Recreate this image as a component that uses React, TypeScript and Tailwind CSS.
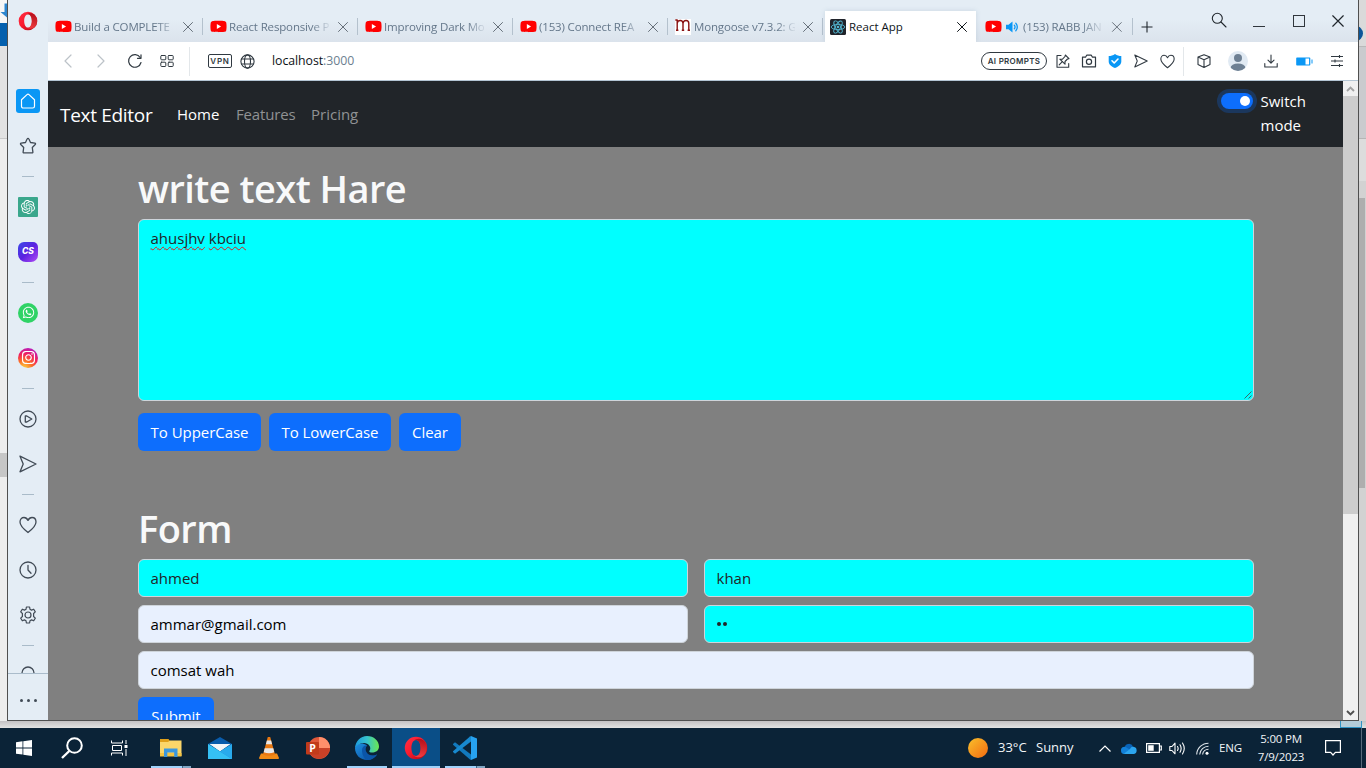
import type { ReactNode } from "react";
import { FaInstagram, FaWhatsapp, FaYoutube } from "react-icons/fa";
import { SiOpenai } from "react-icons/si";

const line = { fill: "none", stroke: "currentColor", strokeLinecap: "round", strokeLinejoin: "round" } as const;

/* ---------- shared glyphs ---------- */

function Opera({ className }: { className: string }) {
  return (
    <svg viewBox="0 0 24 24" className={className}>
      <defs>
        <linearGradient id="opera-a" x1="0" y1="0" x2="1" y2="1">
          <stop offset="0" stopColor="#ff3044" />
          <stop offset=".45" stopColor="#fa1b2f" />
          <stop offset="1" stopColor="#a8060f" />
        </linearGradient>
        <linearGradient id="opera-b" x1="0" y1="0" x2="0" y2="1">
          <stop offset="0" stopColor="#9c0a12" />
          <stop offset="1" stopColor="#ff4b4b" />
        </linearGradient>
      </defs>
      <path fillRule="evenodd" fill="url(#opera-a)" d="M12 .8a11.200 11.200 0 1 0 0 22.400A11.200 11.200 0 0 0 12 .8Zm0 3.200c2.700 0 4.600 3.600 4.600 8s-1.900 8-4.600 8-4.600-3.600-4.600-8 1.900-8 4.600-8Z" />
      <path fill="url(#opera-b)" d="M9.800 4.800C10.500 4.300 11.200 4 12 4c2.700 0 4.600 3.600 4.600 8s-1.900 8-4.600 8c-.8 0-1.500-.3-2.200-.8 3.500 4 13 2.500 13-7.200s-9.500-11.200-13-7.200Z" opacity=".75" />
    </svg>
  );
}

function Cross({ className }: { className: string }) {
  return (
    <svg viewBox="0 0 12 12" className={className}>
      <path {...line} d="M1.500 1.500l9 9M10.500 1.500l-9 9" strokeWidth="1" />
    </svg>
  );
}

function Heart({ className }: { className: string }) {
  return (
    <svg viewBox="0 0 18 18" className={className}>
      <path {...line} strokeWidth="1.300" d="M9 16.500C5 13.500 1 10 1 6.100 1 3.300 2.800 1.500 5 1.500c1.800 0 3.200 1.200 4 2.900.8-1.700 2.200-2.900 4-2.900 2.200 0 4 1.800 4 4.600 0 3.900-4 7.400-8 10.400Z" />
    </svg>
  );
}

function Plane({ className }: { className: string }) {
  return (
    <svg viewBox="0 0 18 18" className={className}>
      <path {...line} strokeWidth="1.300" d="M1 1.200 17 9 1 16.800 4.200 9Z" />
    </svg>
  );
}

function Chevron({ className, d }: { className: string; d: string }) {
  return (
    <svg viewBox="0 0 12 16" className={className}>
      <path {...line} d={d} strokeWidth="1.200" />
    </svg>
  );
}

/* ---------- tabs ---------- */

function YouTubeMark() {
  return (
    <span className="relative flex h-4 w-4 shrink-0 items-center justify-center">
      <span className="h-[7px] w-[7px] bg-white" />
      <FaYoutube className="absolute -left-[0.5px] -top-[0.5px] size-[17px] text-[#f00]" />
    </span>
  );
}

function MongooseMark() {
  return (
    <span className="flex size-4 shrink-0 bg-white">
      <svg viewBox="0 0 16 16" className="size-4">
        <path fill="none" stroke="#8a1212" strokeWidth="1.400" d="M2.200 11.500V.500M2.200 4.500c.3-4 5.800-4 5.800 0v7M8 4.500c.3-4 5.800-4 5.800 0v7M.300 1h2M1 11.200h2.400M6.800 11.200h2.400M12.600 11.200H15" />
      </svg>
    </span>
  );
}

function ReactMark() {
  return (
    <svg viewBox="0 0 16 16" className="size-4 shrink-0">
      <rect width="16" height="16" rx="1.500" fill="#20232a" />
      <g fill="none" stroke="#52b6d0" strokeWidth=".9">
        <ellipse cx="8" cy="8" rx="6.800" ry="2.600" />
        <ellipse cx="8" cy="8" rx="6.800" ry="2.600" transform="rotate(60 8 8)" />
        <ellipse cx="8" cy="8" rx="6.800" ry="2.600" transform="rotate(120 8 8)" />
      </g>
      <circle cx="8" cy="8" r="1.300" fill="#52b6d0" />
    </svg>
  );
}

function Speaker() {
  return (
    <svg viewBox="0 0 12 12" className="ml-[5px] size-3 shrink-0">
      <path fill="#0a97f5" d="M0 3.800h2.500L6.500.5v11L2.500 8.200H0z" />
      <path {...line} stroke="#0a97f5" strokeWidth="1.300" d="M8.300 4.200c1 1 1 2.600 0 3.600M9.800 2.200c2 2 2 5.600 0 7.600" />
    </svg>
  );
}

function Tab({ icon, title, active, muted, last }: { icon: ReactNode; title: string; active?: boolean; muted?: boolean; last?: boolean }) {
  if (active) {
    return (
      <div className="mx-[2px] mt-[11px] flex h-[31px] w-[151px] shrink-0 items-center bg-white pl-[5px] pr-[8px] text-[#10151a] shadow-[0_0_5px_rgba(80,110,140,.18)]">
        {icon}
        <span className="ml-[3px] w-[107px] whitespace-nowrap text-[11.5px]">{title}</span>
        <Cross className="size-3" />
      </div>
    );
  }
  return (
    <div className="flex h-[53px] w-[155px] shrink-0 items-center pl-[7px] text-[#64778a]">
      {icon}
      {muted && <Speaker />}
      <span
        className={
          muted
            ? "ml-[5px] w-[84px] whitespace-nowrap text-[11.5px] tracking-[-0.15px] [mask-image:linear-gradient(to_right,#000_70%,transparent_100%)]"
            : "ml-[3px] w-[101px] whitespace-nowrap text-[11.5px] tracking-[-0.15px] [mask-image:linear-gradient(to_right,#000_82%,transparent_102%)]"
        }
      >
        {title}
      </span>
      <Cross className={last ? "ml-[6px] size-3 text-[#66707a]" : "ml-[7px] size-3 text-[#66707a]"} />
      <span className={last ? "ml-[9px] h-[17px] w-px bg-[#b4c1cd]" : "ml-[8px] h-[17px] w-px bg-[#b4c1cd]"} />
    </div>
  );
}

function TabStrip() {
  return (
    <div className="flex h-[42px] shrink-0 overflow-hidden bg-[linear-gradient(#e4edf5_45%,#dbe3ec)]">
      <Tab icon={<YouTubeMark />} title="Build a COMPLETE" />
      <Tab icon={<YouTubeMark />} title="React Responsive P" />
      <Tab icon={<YouTubeMark />} title="Improving Dark Mo" />
      <Tab icon={<YouTubeMark />} title="(153) Connect REA" />
      <Tab icon={<MongooseMark />} title="Mongoose v7.3.2: G" />
      <Tab icon={<ReactMark />} title="React App" active />
      <Tab icon={<YouTubeMark />} title="(153) RABB JAN" muted last />
      <div className="flex h-[53px] flex-1 items-center text-[#20262c]">
        <svg viewBox="0 0 12 12" className="ml-[8px] size-3"><path d="M6 .5v11M.5 6h11" stroke="currentColor" strokeWidth="1.100" /></svg>
      </div>
      <div className="flex h-10 items-center pr-[13px] text-[#20262c]">
        <svg viewBox="0 0 16 16" className="mr-[26px] size-4"><g {...line} strokeWidth="1.100"><circle cx="6.300" cy="6.300" r="5" /><path d="m10 10 5 5" /></g></svg>
        <span className="mr-[28px] mt-[13px] h-px w-3 bg-[#30363c]" />
        <span className="mr-[26px] mt-[2px] size-3 border border-[#30363c]" />
        <Cross className="mt-[2px] size-[14px]" />
      </div>
    </div>
  );
}

/* ---------- address bar ---------- */

function Slot({ className, children }: { className: string; children: ReactNode }) {
  return <span className={`flex shrink-0 items-center justify-center ${className}`}>{children}</span>;
}

function AddressBar() {
  return (
    <div className="flex h-[39px] shrink-0 items-center border-b border-[#b4c5d3] bg-white text-[#303941]">
      <Slot className="ml-[4px] w-8 text-[#bcc2c8]"><Chevron className="h-4 w-3" d="M9 2 3 8l6 6" /></Slot>
      <Slot className="w-[34px] text-[#bcc2c8]"><Chevron className="h-4 w-3" d="m3 2 6 6-6 6" /></Slot>
      <Slot className="w-[33px]">
        <svg viewBox="0 0 16 16" className="size-4"><g {...line} strokeWidth="1.200"><path d="M14 9.500A6.300 6.300 0 1 1 13.200 4.500" /><path d="M14 1.800v3.500h-3.500" /></g></svg>
      </Slot>
      <Slot className="w-[32px]">
        <svg viewBox="0 0 14 14" className="size-[14px]"><g {...line} strokeWidth="1"><rect x=".8" y="1.500" width="5" height="4.300" rx=".8" /><rect x="8.200" y="1.500" width="5" height="4.300" rx=".8" /><rect x=".8" y="8.200" width="5" height="4.300" rx=".8" /><rect x="8.200" y="8.200" width="5" height="4.300" rx=".8" /></g></svg>
      </Slot>
      <span className="ml-[6px] h-[29px] w-px bg-[#e3e7ea]" />
      <span className="ml-[18px] flex h-[14px] w-6 items-center justify-center rounded-[2px] border border-[#303941] font-[Inter] text-[8px] font-semibold tracking-[0.800px]">VPN</span>
      <svg viewBox="0 0 15 15" className="ml-[8px] size-[15px]"><g {...line} strokeWidth="1.100"><circle cx="7.500" cy="7.500" r="6.600" /><ellipse cx="7.500" cy="7.500" rx="3" ry="6.600" /><path d="M1.500 5h12M1.500 10h12" /></g></svg>
      <span className="ml-[17px] text-[12.3px] tracking-[-0.05px] text-[#0c1116]">localhost<span className="text-[#6c7f90]">:3000</span></span>
      <div className="ml-auto flex items-center pr-[4px]">
        <span className="mr-[3px] flex h-[18px] w-[66px] items-center justify-center rounded-full border border-[#303941] font-[Inter] text-[8px] font-semibold tracking-[0.300px]">AI PROMPTS</span>
        <Slot className="w-[26px]">
          <svg viewBox="0 0 14 14" className="size-[14px]"><g {...line} strokeWidth="1.100"><path d="M5 1.500H1v11.700h11.700V9.500" /><path d="M9.300 1 13 4.700 11.500 5 9 7.500v2.700L3.800 5.200h2.700L9 2.500Z" /><path d="M6.300 7.700 3.200 10.800" /></g></svg>
        </Slot>
        <Slot className="w-[26px]">
          <svg viewBox="0 0 16 14" className="h-[14px] w-4"><g {...line} strokeWidth="1.200"><path d="M1.500 3.200h3l1.200-2h4.600l1.200 2h3v9.600h-13Z" /><circle cx="8" cy="7.700" r="2.600" /></g></svg>
        </Slot>
        <Slot className="w-[26px]">
          <svg viewBox="0 0 14 14" className="size-[14px]"><path fill="#0a97f5" d="M7 0c2 1.500 4 2 6.300 2v5.500c0 3-2.500 5-6.300 6.500C3.200 12.500.7 10.500.7 7.500V2C3 2 5 1.500 7 0Z" /><path {...line} stroke="#fff" strokeWidth="1.600" d="m4 6.800 2.200 2.200L10 5" /></svg>
        </Slot>
        <Slot className="w-[26px]"><Plane className="size-[14px]" /></Slot>
        <Slot className="w-[26px]"><Heart className="size-[15px]" /></Slot>
        <span className="mx-[3px] h-[29px] w-px bg-[#e3e7ea]" />
        <Slot className="w-[34px]">
          <svg viewBox="0 0 14 14" className="size-[14px]"><path {...line} strokeWidth="1.100" d="M7 .7 13 3v7.500L7 13.400 1 10.500V3ZM1 3l6 2.700L13 3M7 5.700v7.700" /></svg>
        </Slot>
        <Slot className="w-[33px]">
          <svg viewBox="0 0 20 20" className="size-5"><clipPath id="face"><circle cx="10" cy="10" r="10" /></clipPath><g clipPath="url(#face)"><rect width="20" height="20" fill="#e1eaf3" /><circle cx="10" cy="7" r="4" fill="#6e8093" /><ellipse cx="10" cy="17" rx="7.500" ry="4.500" fill="#6e8093" /></g></svg>
        </Slot>
        <Slot className="w-[33px]">
          <svg viewBox="0 0 14 14" className="size-[14px]"><path {...line} strokeWidth="1.100" d="M7 1v8M4 6.200l3 3 3-3M.8 9.500V13h12.400V9.500" /></svg>
        </Slot>
        <Slot className="w-[33px]">
          <svg viewBox="0 0 17 9" className="ml-[2px] h-[9px] w-[17px]"><path fill="#0a97f5" d="M1 .5h12.500q.8 0 .8.800v6.400q0 .8-.8.800H1q-.8 0-.8-.8V1.300Q.2.500 1 .5ZM9.500 1.600v5.800h3.600V1.600ZM15.500 2.500h1v4h-1z" fillRule="evenodd" /></svg>
        </Slot>
        <Slot className="w-[34px]">
          <svg viewBox="0 0 12 12" className="size-3"><path d="M0 1.500h12M0 6h12M0 10.500h12M8.500 0v3M4 4.500v3M8.500 9v3" stroke="currentColor" strokeWidth="1.100" /></svg>
        </Slot>
      </div>
    </div>
  );
}

/* ---------- browser sidebar ---------- */

const Item = ({ children }: { children: ReactNode }) => <div className="flex h-[45px] shrink-0 items-center justify-center">{children}</div>;
const Rule = () => <div className="flex h-4 shrink-0 items-center justify-center"><span className="h-px w-3 bg-[#a9bbc9]" /></div>;

function Sidebar() {
  return (
    <aside className="flex w-10 shrink-0 flex-col bg-[#e4edf5] text-[#414b56]">
      <div className="flex h-[78px] shrink-0 justify-center pt-[11px]"><Opera className="size-5" /></div>
      <div className="flex h-[596px] flex-col overflow-hidden border-b border-[#aabccb]">
        <Item>
          <span className="mt-px flex size-6 items-center justify-center rounded-[3px] bg-[#0a97f5] text-white">
            <svg viewBox="0 0 16 16" className="size-4"><path {...line} strokeWidth="1.200" d="M1.500 6.800 7 1.600q1-.8 2 0l5.500 5.200v6.400q0 1.800-1.800 1.800H3.300q-1.800 0-1.800-1.800Z" /></svg>
          </span>
        </Item>
        <Item>
          <svg viewBox="0 0 18 18" className="size-[18px]"><path {...line} strokeWidth="1.300" d="M9 1.300q.6 0 .9.700l1.600 3.500 4.300.7q1.300.3.400 1.300l-2.900 3 .6 4.600q.1 1.100-1 .8H5.100q-1.100.3-1-.8l.6-4.600-2.900-3q-.9-1 .4-1.300l4.300-.7L8.100 2q.3-.7.9-.7Z" /></svg>
        </Item>
        <Rule />
        <Item><span className="flex size-5 items-center justify-center rounded-[1px] bg-[#3aa78c] text-white"><SiOpenai className="size-[14px]" /></span></Item>
        <Item>
          <span className="flex size-5 items-center justify-center rounded-[6px_5px_7px_8px] bg-[linear-gradient(135deg,#3b49e8,#5b22e0_50%,#b44cf5)] font-[Inter] text-[8.5px] font-extrabold italic text-white">CS</span>
        </Item>
        <Rule />
        <Item><span className="flex size-5 items-center justify-center rounded-full bg-[#2fd366] text-white"><FaWhatsapp className="size-[13px]" /></span></Item>
        <Item><span className="flex size-5 items-center justify-center rounded-full bg-[radial-gradient(circle_at_30%_105%,#fdcb3c_5%,#fb6b28_35%,#f0205f_60%,#a31bdc_95%)] text-white"><FaInstagram className="size-[15px]" /></span></Item>
        <Rule />
        <Item>
          <svg viewBox="0 0 18 18" className="size-[18px]"><g {...line} strokeWidth="1.300"><circle cx="9" cy="9" r="8" /><path d="M6.300 6v6h1.500l5-3-5-3Z" /></g></svg>
        </Item>
        <Item><Plane className="size-[18px]" /></Item>
        <Rule />
        <Item><Heart className="size-[18px]" /></Item>
        <Item>
          <svg viewBox="0 0 18 18" className="size-[18px]"><g {...line} strokeWidth="1.300"><circle cx="9" cy="9" r="8" /><path d="M9 4.500V9l3 3.300" /></g></svg>
        </Item>
        <Item>
          <svg viewBox="0 0 18 18" className="size-[18px]"><g {...line} strokeWidth="1.200"><circle cx="9" cy="9" r="3" /><path d="M7.400 1h3.200l.4 2.300 1.500.8 2.200-.9 1.600 2.700L14.600 7.500v3l1.700 1.600-1.600 2.700-2.200-.9-1.500.8-.4 2.300H7.400L7 14.700l-1.500-.8-2.200.9-1.600-2.700 1.700-1.600v-3L1.700 5.900l1.600-2.700 2.200.9L7 3.300Z" /></g></svg>
        </Item>
        <Rule />
        <div className="flex h-5 shrink-0 justify-center pt-[13px]">
          <svg viewBox="0 0 14 14" className="size-[14px] shrink-0"><path {...line} strokeWidth="1.300" d="M1 8.500V7a6 6 0 0 1 12 0v1.500" /></svg>
        </div>
      </div>
      <div className="flex flex-1 items-center justify-center gap-1 pt-[7px]">
        <span className="size-[3px] rounded-full bg-[#414b56]" />
        <span className="size-[3px] rounded-full bg-[#414b56]" />
        <span className="size-[3px] rounded-full bg-[#414b56]" />
      </div>
    </aside>
  );
}

/* ---------- web page ---------- */

function Navbar() {
  return (
    <nav className="flex h-[66px] shrink-0 items-start bg-[#212529] text-[15px] leading-6 text-white">
      <span className="ml-3 mt-[19px] w-[117px] whitespace-nowrap text-[19px] leading-[30px] tracking-[-0.3px]">Text Editor</span>
      <a className="mt-[21px] w-[59px]">Home</a>
      <a className="mt-[21px] w-[75px] tracking-[-0.15px] text-[#909294]">Features</a>
      <a className="mt-[21px] w-[60px] text-[#909294]">Pricing</a>
      <div className="ml-auto mr-[22px] mt-2 flex w-[100px]">
        <span className="mt-1 flex h-4 w-8 items-center justify-end rounded-full bg-[#0d6efd] pr-[3px] shadow-[0_0_0_4px_rgba(13,110,253,.25)]">
          <span className="size-[10px] rounded-full bg-white" />
        </span>
        <span className="ml-[7.5px] w-[55px]">Switch mode</span>
      </div>
    </nav>
  );
}

const Button = ({ className, children }: { className: string; children: ReactNode }) => (
  <button className={`flex h-[38px] items-center justify-center whitespace-nowrap rounded-[6px] bg-[#0d6efd] text-[15px] tracking-[-0.05px] text-white ${className}`}>{children}</button>
);

const Field = ({ className, children }: { className: string; children: ReactNode }) => (
  <div className={`flex h-[38px] items-center rounded-[6px] border border-[#ced4da] px-[11.5px] text-[15px] ${className}`}>{children}</div>
);

const Misspelt = ({ children }: { children: string }) => (
  <span className="underline decoration-[#e01b1b] decoration-wavy decoration-[0.6px] underline-offset-[2px] [text-decoration-skip-ink:none]">{children}</span>
);

function Page() {
  return (
    <main className="flex flex-1 flex-col overflow-hidden bg-[#808080]">
      <Navbar />
      <div className="mx-auto w-[1140px] shrink-0 pl-[12.5px] pr-[11.5px] pt-4">
        <h1 className="mb-2 h-12 whitespace-nowrap text-[38px] font-semibold leading-[50px] tracking-[-0.55px] text-[#f8f9fa]">write text Hare</h1>
        <div className="relative h-[182px] rounded-[6px] border border-[#ced4da] bg-[#0ff] px-[11.5px] py-[6px] text-[15px] leading-6 text-[#212529]">
          <Misspelt>ahusjhv</Misspelt> <Misspelt>kbciu</Misspelt>
          <svg viewBox="0 0 8 8" className="absolute bottom-[1px] right-[1px] size-2"><path d="M.5 7.500l7-7M4.500 7.500l3-3" stroke="#3c5a5a" strokeWidth=".9" /></svg>
        </div>
        <div className="mt-3 flex gap-2">
          <Button className="w-[123px]">To UpperCase</Button>
          <Button className="w-[122px]">To LowerCase</Button>
          <Button className="w-[62px]">Clear</Button>
        </div>
        <h1 className="mb-2 mt-[52px] h-12 text-[38px] font-semibold leading-[50px] tracking-[-0.55px] text-[#f8f9fa]">Form</h1>
        <div className="grid grid-cols-2 gap-x-4 gap-y-2">
          <Field className="bg-[#0ff] text-[#212529]">ahmed</Field>
          <Field className="bg-[#0ff] text-[#212529]">khan</Field>
          <Field className="bg-[#e8f0fe] text-black">ammar@gmail.com</Field>
          <Field className="gap-[2px] bg-[#0ff]">
            <span className="ml-[0.5px] size-1 rounded-full bg-[#212529]" />
            <span className="size-1 rounded-full bg-[#212529]" />
          </Field>
          <Field className="col-span-2 bg-[#e8f0fe] text-black">comsat wah</Field>
        </div>
        <Button className="mt-2 w-[76px]">Submit</Button>
      </div>
    </main>
  );
}

function Scrollbar() {
  return (
    <div className="flex w-[15px] shrink-0 flex-col items-center bg-[#f0f0f0]">
      <span className="flex h-[15px] items-center text-[#a3a3a3]"><svg viewBox="0 0 9 6" className="w-[9px]"><path d="m1 5 3.500-3.500L8 5" fill="none" stroke="currentColor" strokeWidth="1.900" /></svg></span>
      <span className="h-[418px] w-full bg-[#cdcdcd]" />
      <span className="mt-auto flex h-[15px] items-center text-[#505050]"><svg viewBox="0 0 9 6" className="w-[9px]"><path d="m1 1 3.500 3.500L8 1" fill="none" stroke="currentColor" strokeWidth="1.900" /></svg></span>
    </div>
  );
}

/* ---------- taskbar ---------- */

function Task({ children, active, mark }: { children: ReactNode; active?: boolean; mark?: "single" | "stack" }) {
  return (
    <div className={active ? "mr-px flex w-12 flex-col items-center bg-[#0a4e87]" : "mr-px flex w-12 flex-col items-center"}>
      <div className="flex h-[38px] items-center pt-[2px]">{children}</div>
      {active && <span className="h-[2px] w-full bg-[#9fd2fb]" />}
      {mark === "single" && <span className="h-[2px] w-10 bg-[#9fd2fb]" />}
      {mark === "stack" && (
        <span className="flex h-[2px] w-10"><span className="w-[31px] bg-[#9fd2fb]" /><span className="w-px bg-[#3f6483]" /><span className="w-2 bg-[#7fa5c3]" /></span>
      )}
    </div>
  );
}

function Taskbar() {
  return (
    <footer className="flex h-10 shrink-0 bg-[#0b2337] text-[12px] text-[#f2f5f7]">
      <div className="flex w-12 items-center justify-center">
        <svg viewBox="0 0 16 16" className="size-4"><path fill="#fff" d="M0 2.200 6.500 1.300v6.200H0zM7.300 1.200 16 0v7.500H7.300zM0 8.400h6.500v6.200L0 13.700zM7.300 8.400H16V16l-8.700-1.200z" /></svg>
      </div>
      <div className="flex w-12 items-center justify-center">
        <svg viewBox="0 0 22 22" className="size-[22px]"><g fill="none" stroke="#fff"><circle cx="13.500" cy="8.500" r="7.300" strokeWidth="2" /><path d="M8.300 14 1 21" strokeWidth="2.400" /></g></svg>
      </div>
      <div className="flex w-[51px] items-center pl-[15px]">
        <svg viewBox="0 0 17 16" className="h-4 w-[17px]"><path fill="none" stroke="#fff" strokeWidth="1" d="M.5.500v2.500h11V.5M.5 15.500V13h11v2.500M1.500 5.500h9v5h-9zM15 0v4M15 9v7" /><path fill="#fff" d="M13.500 5h3v3h-3z" /></svg>
      </div>
      <Task mark="stack">
        <svg viewBox="0 0 22 18" className="h-[18px] w-[22px]"><path fill="#e0a01a" d="M0 0h8.500l1.500 2v3H0z" /><path fill="#fbd66a" d="M0 3h8l2-1.500h11.500V17H0z" /><path fill="#f5c443" d="M0 14h21.500v3.500H0z" /><path fill="#3b97de" d="M4 9.500h13.500V18h-3.300v-4.500H7.300V18H4z" /></svg>
      </Task>
      <Task>
        <svg viewBox="0 0 24 22" className="h-[22px] w-6"><path fill="#0a5cab" d="m0 7 12-7 12 7-12 7z" /><path fill="#f4f6f8" d="M1.500 7h21L12 14.500z" /><path fill="#1595e0" d="m0 7 12 7.500L24 7v15H0z" /><path fill="#35c0f4" d="M0 22V7l24 15z" /><path fill="#29aaec" d="M12 14.500 24 7v15z" /></svg>
      </Task>
      <Task>
        <svg viewBox="0 0 20 22" className="h-[22px] w-5"><path fill="#f08a16" d="M2 16.500h16l2 4.500q0 1-1 1H1q-1 0-1-1z" /><path fill="#e97812" d="M8.800 0h2.400L16 17.500q-6 2.500-12 0z" /><path fill="#e8e8e8" d="M7.900 3.500h4.200l1 3.800H6.900zM5.700 11.300h8.600l1 4q-5.300 2-10.600 0z" /></svg>
      </Task>
      <Task>
        <svg viewBox="0 0 24 22" className="h-[22px] w-6"><circle cx="13" cy="11" r="11" fill="#e0583a" /><path fill="#ff8f6b" d="M13 0a11 11 0 0 1 11 11H13z" /><path fill="#c94127" d="M2.500 14a11 11 0 0 0 21.500-3H13v3z" /><rect y="5" width="13" height="12.500" rx="1" fill="#c13b1b" /><text x="6.500" y="15" textAnchor="middle" fontFamily="Open Sans" fontSize="10.500" fontWeight="700" fill="#fff">P</text></svg>
      </Task>
      <Task mark="single">
        <svg viewBox="0 0 24 24" className="size-6">
          <defs>
            <linearGradient id="edge-t" x1="0" x2="1"><stop offset="0" stopColor="#1c9ade" /><stop offset=".5" stopColor="#36c3cf" /><stop offset="1" stopColor="#6be84f" /></linearGradient>
            <linearGradient id="edge-b" x1="0" y1="0" x2="1" y2="1"><stop offset="0" stopColor="#1c8fe0" /><stop offset="1" stopColor="#0b4a9c" /></linearGradient>
          </defs>
          <path fill="url(#edge-b)" d="M0 12c0 7 5.500 12 12 12 4.500 0 8-2 10-5.500-5 2.500-12 1-12-4.500 0-2 1-3.500 2-4.500C7 6 1 7.500 0 12Z" />
          <path fill="#0b55a8" d="M7 14c0-3 2.500-5 5-4.500-3 3.500-1 10 6 10 1.500 0 3-.5 4-1C20 22 16 24 12.500 24 9 23 7 18.500 7 14Z" />
          <path fill="url(#edge-t)" d="M0 12C.5 5 5.500 0 12 0c7 0 12 5 12 10.500 0 4.500-4 6-7 6-2 0-3.500-.7-2.500-1.800C17 11.500 13.500 7 9 7 5 7 1.500 9 0 12Z" />
        </svg>
      </Task>
      <Task active><Opera className="size-6" /></Task>
      <Task mark="stack">
        <svg viewBox="0 0 24 24" className="size-6"><path fill="#1279bd" d="M0 8l2-1.700 16 12.200V24L17 23.500 0 8.800z" /><path fill="#1889cf" d="M0 16l2 1.700L18 5.500V0L17 .5 0 15.200z" /><path fill="#27a2f0" d="m18 0 6 2.500v19L18 24z" /></svg>
      </Task>

      <div className="ml-auto flex items-center">
        <span className="size-5 rounded-full bg-[linear-gradient(135deg,#f9c02c,#f36a10)]" />
        <span className="ml-[10px] w-[38px] whitespace-nowrap text-[13px]">33°C</span>
        <span className="w-[61px] text-[13px]">Sunny</span>
        <svg viewBox="0 0 12 7" className="ml-[2px] h-[7px] w-3"><path d="m.5 6.500 5.500-5.500 5.500 5.500" fill="none" stroke="#fff" strokeWidth="1.200" /></svg>
        <svg viewBox="0 0 16 11" className="ml-[10px] h-[11px] w-4"><path fill="#0a64b8" d="M3.500 4.500A4.500 4.500 0 0 1 12 3.500L9 9z" /><path fill="#1280d8" d="M0 7.500A3.300 3.300 0 0 1 5 4.300L11 8l-8.500 3Q0 10.500 0 7.500Z" /><path fill="#2ca5ee" d="M2.500 11 9 6q1-2.500 3.500-2.200A3.700 3.700 0 0 1 13 11z" /></svg>
        <svg viewBox="0 0 16 10" className="ml-[9px] h-[10px] w-4"><path d="M.6.600h12.800v8.800H.6zM14 3h1.300v4H14" fill="none" stroke="#fff" strokeWidth="1.200" /><path fill="#fff" d="M2.200 2.200h5.500v5.600H2.200z" /></svg>
        <svg viewBox="0 0 17 13" className="ml-[7px] h-[13px] w-[17px]"><g {...line} stroke="#fff" strokeWidth="1.100"><path d="M.8 4.500H3L6 1.200v10.600L3 8.500H.8ZM8.500 4.500q1.300 2 0 4M11 2.800q2.300 3.700 0 7.400M13.500 1q3.500 5.500 0 11" /></g></svg>
        <svg viewBox="0 0 13 13" className="ml-[10px] size-[13px]"><g fill="none" stroke="#dfe5ea" strokeWidth="1.100"><path d="M.7 12.500A11.800 11.800 0 0 1 12.500 1.200M3.700 12.500a8.800 8.800 0 0 1 8.800-8.200M6.600 12.500a6 6 0 0 1 5.900-5.300" /></g><circle cx="11" cy="11.300" r="1.500" fill="#fff" /></svg>
        <span className="ml-[10px] w-[24px] whitespace-nowrap text-[11.5px] tracking-[-0.1px]">ENG</span>
        <span className="flex w-[76px] flex-col items-center whitespace-nowrap text-[11.5px] leading-[18px] tracking-[-0.2px]"><span>5:00 PM</span><span>7/9/2023</span></span>
        <svg viewBox="0 0 16 16" className="ml-[6px] size-4"><path d="M.6.600h14.800v11.800h-5L8 15l-2.400-2.600h-5z" fill="none" stroke="#fff" strokeWidth="1.200" /></svg>
        <span className="ml-5 h-10 w-px bg-[#56697a]" />
        <span className="w-1" />
      </div>
    </footer>
  );
}

/* ---------- slivers of the window behind ---------- */

function LeftEdge() {
  return (
    <div className="flex w-[7px] shrink-0 flex-col bg-[#ededed]">
      <span className="flex h-[23px] items-start bg-[#f6f6f6] pt-[3px]"><svg viewBox="0 0 7 14" className="h-[15px] w-[7px]"><path fill="#2d86cf" d="M4.500 0H7v14L.5 8.500h4z" /></svg></span>
      <span className="h-[23px] bg-[#0460ae]" />
      <span className="h-[93px] border-b border-[#c9c9c9] bg-[#e2e2e2]" />
      <span className="h-[314px]" />
      <span className="h-6 bg-[#c6c6c6]" />
    </div>
  );
}

function RightEdge() {
  return (
    <div className="flex w-[7px] shrink-0 flex-col bg-[#d2d2d2]">
      <span className="flex h-[47px] overflow-hidden border-b border-[#b9b9b9] bg-[#dadada] pt-[26px]"><span className="-ml-[11px] size-[15px] shrink-0 rounded-full bg-[#0b5699]" /></span>
      <span className="h-[92px] border-b border-[#b5b5b5] bg-[#cacbce]" />
      <span className="h-[42px] bg-[#dcdcdc]" />
      <span className="h-[17px] bg-[#d2d2d2]" />
      <span className="h-[290px] w-[6px] bg-[#aeaeae]" />
    </div>
  );
}

export default function App() {
  return (
    <div className="flex h-[768px] w-[1366px] flex-col overflow-hidden bg-[#d6d6d6] font-['Open_Sans','Noto_Sans',sans-serif]">
      <div className="flex h-[721px] shrink-0">
        <LeftEdge />
        <section className="flex h-[721px] w-[1352px] shrink-0 border-x border-b border-[#4f4f4f]">
          <Sidebar />
          <div className="flex min-w-0 flex-1 flex-col">
            <TabStrip />
            <AddressBar />
            <div className="flex min-h-0 flex-1">
              <Page />
              <Scrollbar />
            </div>
          </div>
        </section>
        <RightEdge />
      </div>
      <div className="flex h-[7px] shrink-0 justify-end bg-[linear-gradient(#c4c2c4,#e2e2e2)]">
        <span className="mr-1 w-[22px] border-b border-r border-l border-[#2f93c4] bg-[#b3ccd9]" />
      </div>
      <Taskbar />
    </div>
  );
}
